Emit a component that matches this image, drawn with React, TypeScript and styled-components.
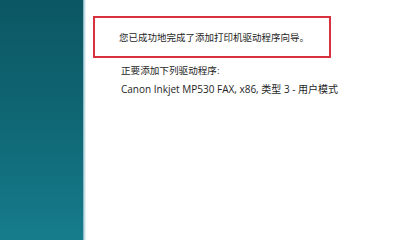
import React from "react";
import styled, { createGlobalStyle } from "styled-components";

const Global = createGlobalStyle`
  html, body { margin: 0; padding: 0; background: #ffffff; }
  body { width: 400px; height: 240px; overflow: hidden; }
  #root { width: 400px; height: 240px; }
`;

const Page = styled.div`
  display: flex;
  width: 400px;
  height: 240px;
  background: #ffffff;
  font-family: "Segoe UI", "Open Sans", "Noto Sans CJK SC", sans-serif;
  color: #1a1a1a;
`;

const Sidebar = styled.div`
  width: 83px;
  flex: none;
  background: linear-gradient(180deg, #0b5763 0%, #0f6572 45%, #167c8c 100%);
`;

const Edge = styled.div`
  width: 3px;
  flex: none;
  background: linear-gradient(90deg, #6ea6b4 0%, #c4dee6 50%, #f2f8fa 100%);
`;

const Main = styled.div`
  flex: 1;
  padding: 16px 0 0 7px;
  display: flex;
  flex-direction: column;
`;

const Highlight = styled.div`
  width: 238px;
  height: 42px;
  box-sizing: border-box;
  border: 2px solid #d8303c;
  display: flex;
  align-items: center;
  padding-left: 24px;
  font-size: 9.5px;
  font-family: "Noto Sans CJK SC", sans-serif;
  color: #1e1e1e;
`;

const Details = styled.div`
  padding: 4px 0 0 28px;
  display: flex;
  flex-direction: column;
`;

const Line = styled.div<{ $size?: number }>`
  height: 18px;
  line-height: 18px;
  font-size: ${(p) => p.$size ?? 10}px;
  white-space: nowrap;
  font-family: "Open Sans", "Noto Sans CJK SC", sans-serif;
  color: #1e1e1e;
`;

export default function App() {
  return (
    <>
      <Global />
      <Page>
        <Sidebar />
        <Edge />
        <Main>
          <Highlight>您已成功地完成了添加打印机驱动程序向导。</Highlight>
          <Details>
            <Line $size={9.6}>正要添加下列驱动程序:</Line>
            <Line>Canon Inkjet MP530 FAX, x86, 类型 3 - 用户模式</Line>
          </Details>
        </Main>
      </Page>
    </>
  );
}
